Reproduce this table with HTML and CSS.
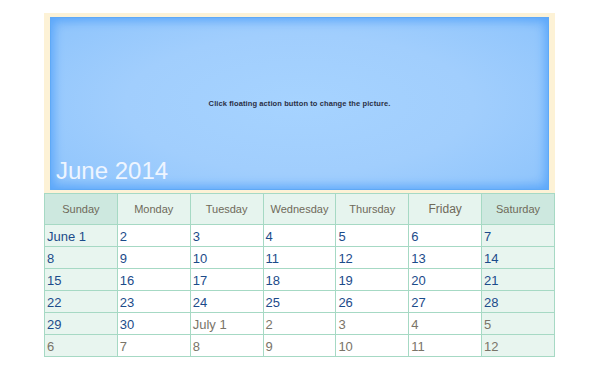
FILE: index.html
```html
<!DOCTYPE html>
<html>
<head>
<meta charset="utf-8">
<link rel="stylesheet" href="styles.css">
</head>
<body>
<div class="cal">
  <div class="frame">
    <div class="picture">
      <p class="hint">Click floating action button to change the picture.</p>
      <h1 class="month">June 2014</h1>
    </div>
  </div>
  <table class="grid">
    <thead>
      <tr>
        <th class="we">Sunday</th>
        <th>Monday</th>
        <th>Tuesday</th>
        <th>Wednesday</th>
        <th>Thursday</th>
        <th class="big">Friday</th>
        <th class="we">Saturday</th>
      </tr>
    </thead>
    <tbody>
      <tr class="first"><td class="we">June 1</td><td>2</td><td>3</td><td>4</td><td>5</td><td>6</td><td class="we">7</td></tr>
      <tr><td class="we">8</td><td>9</td><td>10</td><td>11</td><td>12</td><td>13</td><td class="we">14</td></tr>
      <tr><td class="we">15</td><td>16</td><td>17</td><td>18</td><td>19</td><td>20</td><td class="we">21</td></tr>
      <tr><td class="we">22</td><td>23</td><td>24</td><td>25</td><td>26</td><td>27</td><td class="we">28</td></tr>
      <tr><td class="we">29</td><td>30</td><td class="other">July 1</td><td class="other">2</td><td class="other">3</td><td class="other">4</td><td class="we other">5</td></tr>
      <tr><td class="we other">6</td><td class="other">7</td><td class="other">8</td><td class="other">9</td><td class="other">10</td><td class="other">11</td><td class="we other">12</td></tr>
    </tbody>
  </table>
</div>
</body>
</html>
```
FILE: styles.css
```css
html, body {
  margin: 0;
  padding: 0;
  background: #ffffff;
}
body {
  font-family: "Liberation Sans", Arial, sans-serif;
}
.cal {
  width: 511px;
  margin: 13px 0 0 44px;
}
.frame {
  background: #fdf2d6;
  padding: 4px 6px 3px 6px;
}
.picture {
  position: relative;
  height: 171px;
  border: 1px solid #5fa9f6;
  background: radial-gradient(ellipse 70% 80% at 50% 50%, #a6d3ff 0%, #a1cefd 50%, #92c6fc 85%, #7db9fa 100%);
  box-shadow: inset 0 0 10px 3px rgba(80, 160, 250, 0.8);
  display: flex;
  flex-direction: column;
  align-items: stretch;
}
.hint {
  margin: 81px 0 0 0;
  text-align: center;
  font-size: 7.5px;
  color: #2a2f45;
  font-weight: bold;
  letter-spacing: 0.1px;
}
.month {
  margin: auto 0 5px 5px;
  font-weight: normal;
  font-size: 24px;
  color: #eef5ff;
  line-height: 26px;
}
.grid {
  width: 511px;
  border-collapse: collapse;
  table-layout: fixed;
}
.grid th, .grid td {
  border: 1px solid #a6d9c4;
}
.grid th {
  height: 30px;
  padding: 0;
  font-weight: normal;
  font-size: 11px;
  color: #6f6a5a;
  background: #e6f4ee;
  text-align: center;
}
.grid th.we {
  background: #cde8df;
}
.grid th.big {
  font-size: 12px;
}
.grid td {
  height: 20px;
  padding: 1px 0 0 2px;
  font-size: 13px;
  line-height: 15px;
  color: #1c4b8a;
  background: #ffffff;
  vertical-align: middle;
  text-align: left;
}
.grid td.we {
  background: #e8f5ef;
}
.grid td.other {
  color: #7a7468;
}
```
